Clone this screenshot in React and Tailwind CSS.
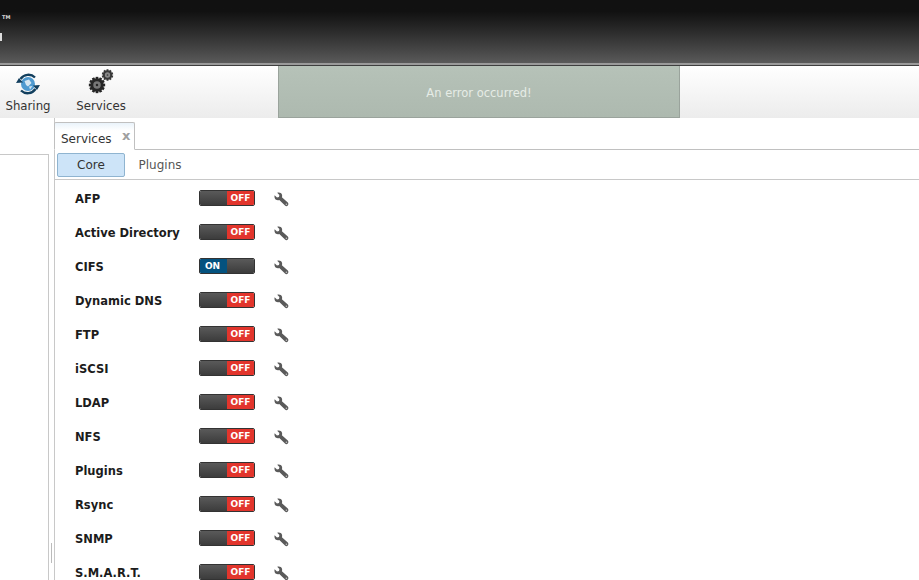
const font = { fontFamily: '"DejaVu Sans", Verdana, sans-serif' };

const services = [
  ["AFP", false],
  ["Active Directory", false],
  ["CIFS", true],
  ["Dynamic DNS", false],
  ["FTP", false],
  ["iSCSI", false],
  ["LDAP", false],
  ["NFS", false],
  ["Plugins", false],
  ["Rsync", false],
  ["SNMP", false],
  ["S.M.A.R.T.", false],
];

function Wrench() {
  return (
    <svg width="15" height="15" viewBox="0 0 15 15" className="block">
      <path
        d="M0.6 3.2 L3 5.4 L5 4.9 L5.4 2.9 L3.2 0.7 C5.2 0 7.2 0.6 7.9 2.4 C8.3 3.4 8.2 4.4 7.9 5.2 L13.8 10.6 C14.6 11.4 14.6 12.8 13.8 13.6 C13 14.4 11.8 14.4 11 13.6 L5.3 7.9 C4.3 8.3 3 8.3 2 7.7 C0.6 6.9 0.2 4.9 0.6 3.2 Z"
        fill="#5a5a5a"
      />
      <circle cx="12.4" cy="12.2" r="0.8" fill="#c4c4c4" />
    </svg>
  );
}

function Toggle({ on }) {
  const dark = (
    <div className="w-[28px] h-full bg-gradient-to-b from-[#5a5a5a] to-[#3c3c3c]" />
  );
  return (
    <div className="flex w-[56px] h-[16px] rounded-[2px] overflow-hidden border border-[#333333] shrink-0">
      {on ? (
        <>
          <div className="w-[28px] h-full bg-[#04527f] text-white text-[9px] font-bold flex items-center justify-center leading-none pr-[2px]">
            ON
          </div>
          {dark}
        </>
      ) : (
        <>
          {dark}
          <div className="w-[28px] h-full bg-[#e2352c] text-white text-[9px] font-bold flex items-center justify-center leading-none">
            OFF
          </div>
        </>
      )}
    </div>
  );
}

function SharingIcon() {
  return (
    <svg width="26" height="26" viewBox="0 0 26 26">
      <circle cx="13" cy="13" r="7" fill="#4f9ad0" />
      <path d="M9.5 10 L14 8.5 L16.5 12 L13 15.5 L11 14 Z M14 15.5 L17.5 15 L15 18.5 Z" fill="#d5e6f2" />
      <path d="M5.5 8 A9.5 9.5 0 0 1 20 6.5" fill="none" stroke="#123f5e" strokeWidth="2.4" />
      <path d="M20.5 18 A9.5 9.5 0 0 1 6 19.5" fill="none" stroke="#123f5e" strokeWidth="2.4" />
      <path d="M1 12 L4 7 L8 11.5 Z" fill="#123f5e" />
      <path d="M25 14 L22 19 L18 14.5 Z" fill="#123f5e" />
    </svg>
  );
}

function Gear({ cx, cy, r, teeth, fill, hole }) {
  const t = [];
  for (let i = 0; i < teeth; i++) {
    const a = (i * 360) / teeth;
    t.push(
      <rect
        key={i}
        x={cx - r * 0.2}
        y={cy - r * 1.2}
        width={r * 0.4}
        height={r * 0.5}
        fill={fill}
        transform={`rotate(${a} ${cx} ${cy})`}
      />
    );
  }
  return (
    <g>
      {t}
      <circle cx={cx} cy={cy} r={r} fill={fill} />
      <circle cx={cx} cy={cy} r={r * 0.55} fill={hole} />
      <circle cx={cx} cy={cy} r={r * 0.18} fill={fill} />
    </g>
  );
}

function ServicesIcon() {
  return (
    <svg width="26" height="26" viewBox="0 0 26 26">
      <Gear cx={9} cy={16} r={6.8} teeth={12} fill="#262626" hole="#777777" />
      <Gear cx={19.5} cy={6} r={4.8} teeth={10} fill="#3a3a3a" hole="#8a8a8a" />
    </svg>
  );
}

export default function App() {
  return (
    <div className="w-[919px] h-[580px] overflow-hidden bg-white text-[#222222] flex flex-col" style={font}>
      <header className="h-[63px] shrink-0 relative bg-gradient-to-b from-[#111111] from-[18%] to-[#5a5a5a]">
        <span className="absolute left-[2px] top-[15px] text-[5px] font-bold leading-none text-[#dddddd]">TM</span>
        <span className="absolute left-0 top-[33px] w-[2px] h-[8px] bg-[#dddddd]" />
      </header>
      <div className="h-[3px] shrink-0 bg-[#9a9a9a] border-b border-[#3f3f3f]" />
      <div className="h-[52px] shrink-0 flex bg-gradient-to-b from-[#ffffff] to-[#ececec]">
        <div className="w-[278px] shrink-0 flex">
          <div className="w-[56px] flex flex-col items-center pt-[5px]">
            <SharingIcon />
            <span className="text-[11.75px] leading-[14px] mt-[2px] text-[#333333]">Sharing</span>
          </div>
          <div className="w-[90px] flex flex-col items-center pt-[3px]">
            <ServicesIcon />
            <span className="text-[11.75px] leading-[14px] mt-[4px] text-[#333333]">Services</span>
          </div>
        </div>
        <div className="w-[402px] shrink-0 flex items-center justify-center pt-[4px] bg-gradient-to-b from-[#b6c2b8] to-[#adb9af] border border-t-0 border-[#9aa39c] text-[11.5px] text-[#e6ece6]">
          An error occurred!
        </div>
      </div>
      <div className="flex-1 flex min-h-0">
        <div className="w-[54px] shrink-0 flex pt-[36px]">
          <div className="w-[49px] h-full border-t border-r border-[#c8c8c8]" />
          <div className="w-[5px] flex items-end justify-center pb-[17px]">
            <div className="w-[1px] h-[20px] bg-[#bbbbbb]" />
          </div>
        </div>
        <div className="flex-1 min-w-0 flex flex-col border-l border-[#c8c8c8] pt-[4px]">
          <div className="h-[28px] shrink-0 flex border-b border-[#c0c0c0]">
            <div className="w-[81px] h-[28px] -ml-[1px] border border-[#c0c0c0] border-b-white rounded-t-[2px] bg-gradient-to-b from-[#eaf3fb] from-[0%] to-white to-[30%] flex items-center pl-[6px] pt-[5px] text-[12px] text-[#333333] relative">
              Services
              <span className="absolute left-[67px] top-[6px] text-[13px] font-bold leading-[14px] text-[#a0a0a0]">x</span>
            </div>
          </div>
          <div className="h-[30px] shrink-0 flex items-start border-b border-[#c8c8c8] pt-[3px] pl-[2px] text-[12px]">
            <div className="w-[68px] h-[24px] rounded-[2px] bg-[#cde4f8] border border-[#8fb4d0] flex items-center justify-center text-[#333333]">
              Core
            </div>
            <div className="w-[70px] h-[24px] flex items-center justify-center text-[#555555]">Plugins</div>
          </div>
          <div className="flex flex-col pl-[20px] pt-[10px]">
            {services.map(([name, on]) => (
              <div key={name} className="h-[34px] shrink-0 flex items-start">
                <div className="w-[124px] shrink-0 text-[11.5px] font-bold leading-[18px] text-[#1c1c1c]">{name}</div>
                <Toggle on={on} />
                <div className="ml-[19px] mt-[2px]">
                  <Wrench />
                </div>
              </div>
            ))}
          </div>
        </div>
      </div>
    </div>
  );
}
